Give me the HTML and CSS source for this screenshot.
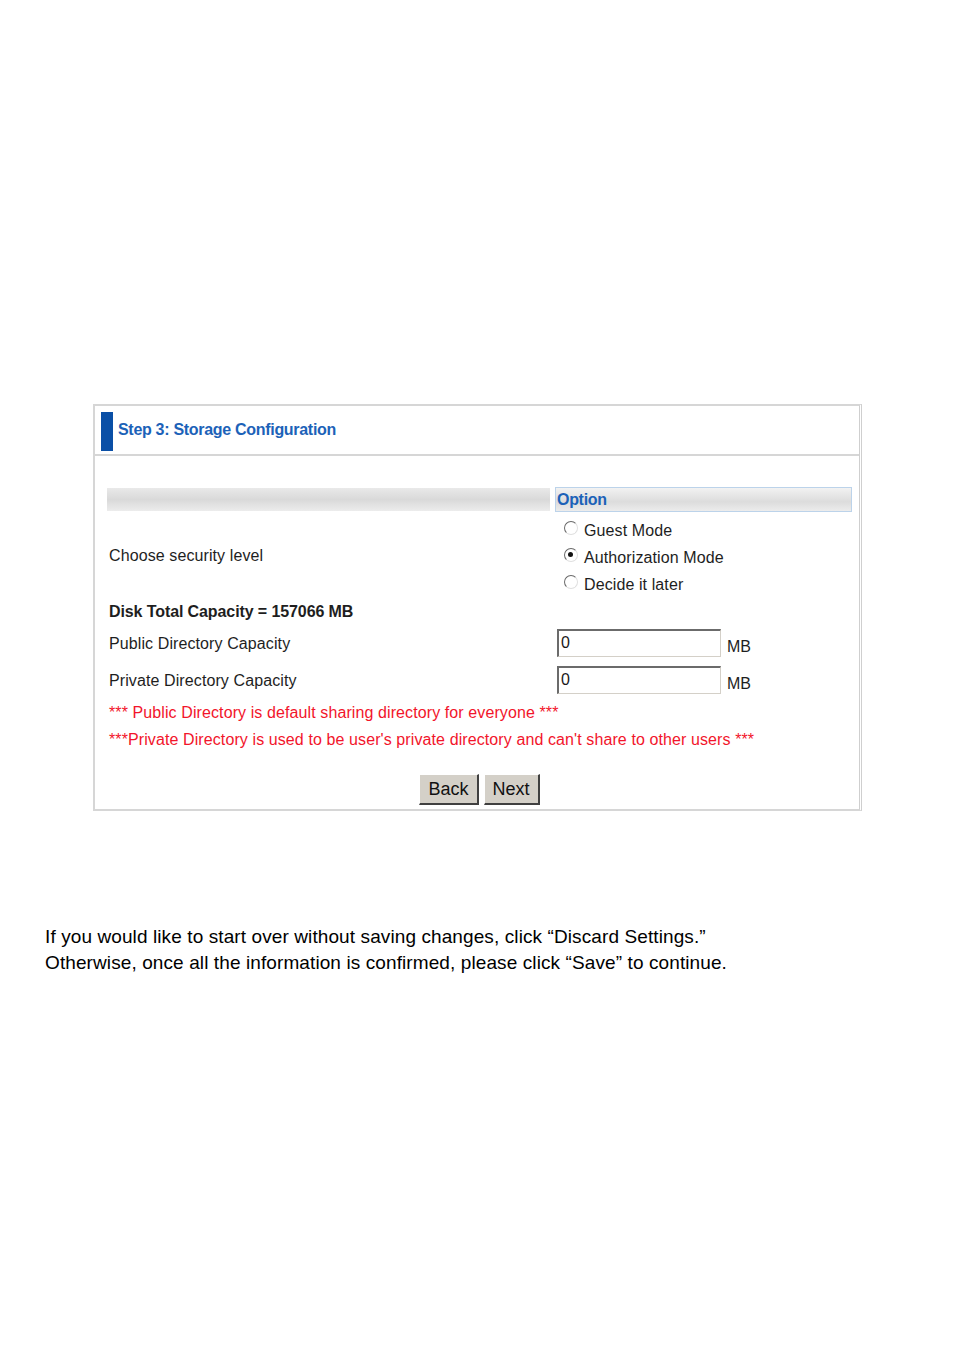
FILE: index.html
```html
<!DOCTYPE html>
<html>
<head>
<meta charset="utf-8">
<link rel="stylesheet" href="styles.css">
</head>
<body>
<div class="page">
  <div class="panel">
    <div class="panel-head">
      <span class="bar"></span>
      <span class="title">Step 3: Storage Configuration</span>
    </div>
    <div class="panel-body">
      <div class="row head-row">
        <div class="col-l grad"></div>
        <div class="col-r opt-head">Option</div>
      </div>
      <div class="row sec-row">
        <div class="col-l label">Choose security level</div>
        <div class="col-r radios">
          <div class="radio-line"><span class="radio"></span>Guest Mode</div>
          <div class="radio-line"><span class="radio checked"></span>Authorization Mode</div>
          <div class="radio-line"><span class="radio"></span>Decide it later</div>
        </div>
      </div>
      <div class="row total-row">
        <div class="col-l label bold">Disk Total Capacity = 157066 MB</div>
      </div>
      <div class="row cap-row">
        <div class="col-l label">Public Directory Capacity</div>
        <div class="col-r field"><input class="box" type="text" value="0"><span class="unit">MB</span></div>
      </div>
      <div class="row cap-row">
        <div class="col-l label">Private Directory Capacity</div>
        <div class="col-r field"><input class="box" type="text" value="0"><span class="unit">MB</span></div>
      </div>
      <div class="note">*** Public Directory is default sharing directory for everyone ***</div>
      <div class="note">***Private Directory is used to be user's private directory and can't share to other users ***</div>
      <div class="buttons">
        <button class="btn">Back</button>
        <button class="btn">Next</button>
      </div>
    </div>
  </div>
  <p class="para">If you would like to start over without saving changes, click “Discard Settings.”<br>Otherwise, once all the information is confirmed, please click “Save” to continue.</p>
</div>
</body>
</html>
```

FILE: styles.css
```css
html, body {
  margin: 0;
  padding: 0;
  background: #ffffff;
}
.page {
  padding-top: 404px;
  font-family: "Liberation Sans", Arial, sans-serif;
}
.panel {
  margin-left: 93px;
  width: 764px;
  border: 2px solid #d6d6d6;
  border-right: 3px double #cfcfcf;
  color: #1e1e1e;
}
.panel-head {
  height: 48px;
  border-bottom: 2px solid #d6d6d6;
  display: flex;
  align-items: center;
  padding-left: 6px;
}
.bar {
  width: 12px;
  height: 39px;
  background: #0a4fa6;
  margin-top: 2px;
}
.title {
  margin-left: 5px;
  font-size: 16px;
  font-weight: bold;
  color: #1c62b8;
  letter-spacing: -0.3px;
}
.panel-body {
  padding: 31px 7px 4px 12px;
}
.row {
  display: flex;
  gap: 5px;
}
.col-l {
  width: 443px;
  flex: none;
}
.col-r {
  width: 297px;
  flex: none;
}
.head-row {
  height: 25px;
}
.grad {
  height: 23px;
  margin-top: 1px;
  background: linear-gradient(#e9e9e9, #d9d9d9 50%, #ececec);
}
.opt-head {
  box-sizing: border-box;
  height: 25px;
  border: 1px solid #bcd3ea;
  background: linear-gradient(#f2f2f2, #dcdcdc 60%, #ececec);
  color: #1c62b8;
  font-size: 16px;
  font-weight: bold;
  padding-left: 1px;
  line-height: 23px;
  letter-spacing: -0.3px;
}
.label {
  font-size: 16px;
  padding-left: 2px;
  padding-top: 2px;
  letter-spacing: 0.1px;
}
.bold {
  font-weight: bold;
  letter-spacing: -0.1px;
}
.sec-row {
  height: 86px;
  align-items: center;
}
.radios {
  align-self: flex-start;
  display: flex;
  flex-direction: column;
  padding: 5px 0 0 7px;
  box-sizing: border-box;
}
.radio-line {
  height: 27px;
  display: flex;
  align-items: center;
  font-size: 16px;
  letter-spacing: 0.1px;
}
.radio {
  box-sizing: border-box;
  width: 14px;
  height: 14px;
  border-radius: 50%;
  border: 1px solid #9a9a9a;
  border-top-color: #6a6a6a;
  border-left-color: #6a6a6a;
  border-bottom-color: #e0e0e0;
  border-right-color: #e0e0e0;
  background: #fff;
  margin-right: 6px;
  margin-top: -5px;
  position: relative;
}
.radio.checked::after {
  content: "";
  position: absolute;
  left: 3px;
  top: 3px;
  width: 5px;
  height: 5px;
  border-radius: 50%;
  background: #111;
}
.total-row {
  height: 26px;
  align-items: center;
}
.cap-row {
  height: 37px;
  align-items: center;
}
.field {
  display: flex;
  align-items: center;
}
.box {
  box-sizing: border-box;
  width: 164px;
  height: 28px;
  border-top: 2px solid #6b6b6b;
  border-left: 2px solid #6b6b6b;
  border-bottom: 1px solid #d4d0c8;
  border-right: 1px solid #d4d0c8;
  padding: 0 0 0 2px;
  font-family: "Liberation Sans", Arial, sans-serif;
  font-size: 16px;
  color: #1a1a1a;
  outline: none;
}
.unit {
  font-size: 16px;
  margin-left: 6px;
  margin-top: 8px;
}
.note {
  color: #f2152b;
  font-size: 16px;
  padding-left: 2px;
  padding-top: 1px;
  height: 26px;
  line-height: 27px;
  letter-spacing: 0.1px;
}
.buttons {
  display: flex;
  justify-content: center;
  gap: 5px;
  margin-top: 22px;
}
.btn {
  box-sizing: border-box;
  height: 31px;
  padding: 0 8px;
  background: #d4d0c8;
  border-top: 1px solid #ffffff;
  border-left: 1px solid #ffffff;
  border-right: 2px solid #404040;
  border-bottom: 2px solid #404040;
  font-family: "Liberation Sans", Arial, sans-serif;
  font-size: 18px;
  color: #111;
}
.para {
  margin: 113px 0 0 45px;
  font-size: 19px;
  line-height: 26px;
  letter-spacing: 0.1px;
  color: #000;
}
```
